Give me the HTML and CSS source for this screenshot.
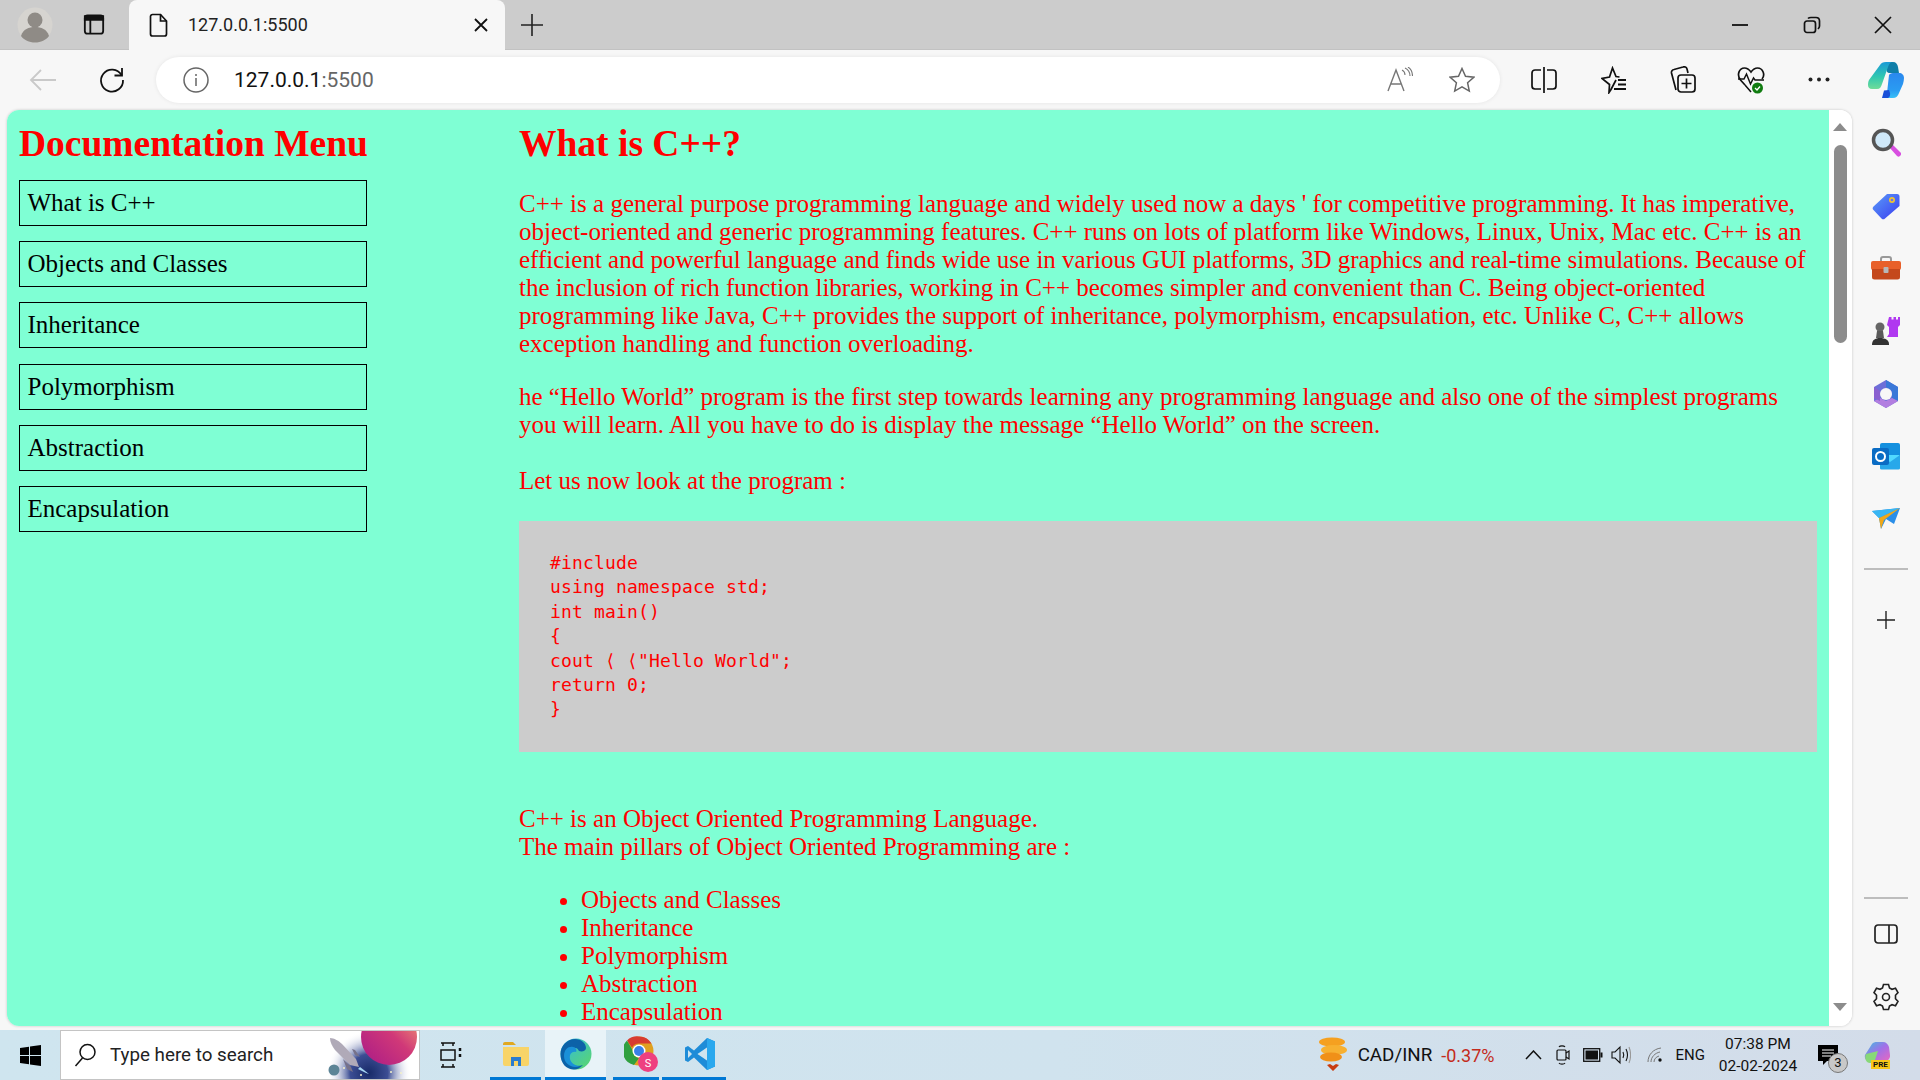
FILE: index.html
```html
<!DOCTYPE html>
<html lang="en">
<head>
    <meta charset="UTF-8">
    <meta name="viewport" content="width=device-width, initial-scale=1.0">
    <title>127.0.0.1:5500</title>
    <link rel="stylesheet" href="styles.css">
</head>
<body>
    <div class="tabstrip">
        <div class="strip-left">
            <svg width="36" height="36" viewBox="0 0 36 36"><circle cx="18" cy="18" r="17.5" fill="#d6d4d0"/><circle cx="18" cy="13" r="7.5" fill="#8f8b86"/><path d="M4 29c2-7 8-9 14-9s12 2 14 9c-3 4-8 6.500-14 6.500S7 33 4 29z" fill="#8f8b86"/></svg>
            <svg width="22" height="23" viewBox="0 0 24 24" fill="none" stroke="#111" stroke-width="2"><rect x="2" y="2" width="20" height="20" rx="3"/><path d="M2 7h20V3H2z" fill="#111"/><path d="M8 7v15"/></svg>
        </div>
        <div class="tab">
            <svg width="20" height="24" viewBox="0 0 20 24" fill="none" stroke="#111" stroke-width="1.700"><path d="M3.500 1.500h8l6 6.500v13a2 2 0 0 1-2 2h-12a2 2 0 0 1-2-2v-17.500a2 2 0 0 1 2-2z"/><path d="M11.500 1.500v6.500h6"/></svg>
            <span class="tab-title">127.0.0.1:5500</span>
            <svg width="14" height="14" viewBox="0 0 14 14" stroke="#111" stroke-width="1.800"><path d="M1 1l12 12M13 1L1 13"/></svg>
        </div>
        <svg class="new-tab" width="24" height="24" viewBox="0 0 24 24" stroke="#222" stroke-width="1.600"><path d="M12 1v22M1 12h22"/></svg>
        <div class="win-controls">
            <div class="win-btn"><svg width="16" height="16" viewBox="0 0 16 16" stroke="#111" stroke-width="1.800"><path d="M0 8h16"/></svg></div>
            <div class="win-btn"><svg width="18" height="18" viewBox="0 0 18 18" fill="none" stroke="#111" stroke-width="1.700"><rect x="1.500" y="5" width="11" height="11.500" rx="2.500"/><path d="M5 2.500C6 1.500 7 1.500 8 1.500h5c2 0 3.500 1.500 3.500 3.500v5c0 1-.5 2-1.500 3"/></svg></div>
            <div class="win-btn"><svg width="18" height="18" viewBox="0 0 18 18" stroke="#111" stroke-width="1.700"><path d="M1 1l16 16M17 1L1 17"/></svg></div>
        </div>
    </div>

    <div class="toolbar">
        <div class="nav-btn back"><svg width="28" height="24" viewBox="0 0 28 24" fill="none" stroke="#c9c9c9" stroke-width="1.800"><path d="M27 12H2M12 2L2 12l10 10"/></svg></div>
        <div class="nav-btn"><svg width="28" height="28" viewBox="0 0 28 28" fill="none" stroke="#111" stroke-width="1.800"><path d="M23.500 9A11 11 0 1 0 25 14"/><path d="M24 2v7.500h-7.500"/></svg></div>
        <div class="omnibox">
            <svg width="26" height="26" viewBox="0 0 26 26" fill="none" stroke="#666" stroke-width="1.500"><circle cx="13" cy="13" r="12"/><path d="M13 11v8M13 7v2"/></svg>
            <span class="url">127.0.0.1<span class="url-port">:5500</span></span>
            <svg class="read-aloud" width="26" height="26" viewBox="0 0 26 26" fill="none" stroke="#777" stroke-width="1.400"><path d="M1 24L9 3l8 21M4 17h10"/><path d="M15 3c2 1 3 3 3 5M18 1c3 1.500 5 4 5 8M21 0c3 2 4.500 5 4.500 9" stroke-width="1.100"/></svg>
            <svg class="fav-star" width="26" height="26" viewBox="0 0 26 26" fill="none" stroke="#666" stroke-width="1.500"><path d="M13 1.500l3.500 7.700 8.300 1-6.200 5.600 1.700 8.300-7.300-4.200-7.300 4.200 1.700-8.300-6.200-5.600 8.300-1z"/></svg>
        </div>
        <div class="tools">
            <div class="tool"><svg width="26" height="28" viewBox="0 0 26 28" fill="none" stroke="#111" stroke-width="1.700"><path d="M10 4H4a3 3 0 0 0-3 3v13a3 3 0 0 0 3 3h6M16 4h6a3 3 0 0 1 3 3v13a3 3 0 0 1-3 3h-6M13 1v26"/></svg></div>
            <div class="tool shift"><svg width="26" height="28" viewBox="0 0 26 28" fill="none" stroke="#111" stroke-width="1.700"><path d="M15 14l-5 9.500-2 3 .5-8L1 12.500l7.500-1.500L11.500 2l3.500 8.500 3.500.5"/><path d="M17 14h8M17 18.500h8M13 23h12" stroke-width="1.800"/></svg></div>
            <div class="tool"><svg width="26" height="28" viewBox="0 0 26 28" fill="none" stroke="#111" stroke-width="1.700"><path d="M6 24L1.500 7A3 3 0 0 1 4 3.500l9-2.500a3 3 0 0 1 4 2l1 4"/><rect x="8" y="9" width="17" height="17" rx="3"/><path d="M16.500 12.500v10M11.500 17.500h10"/></svg></div>
            <div class="tool"><svg width="28" height="30" viewBox="0 0 28 30" fill="none"><path d="M8 20L3.500 15C-.5 10 2 3 7.500 3c3 0 5 2 6.500 4 1.500-2 3.500-4 6.500-4C26 3 28.500 10 25 14" stroke="#111" stroke-width="1.700"/><path d="M1 14h6l2.500-5 4 10 3-6 1.500 2h9M8 20l6 7" stroke="#111" stroke-width="1.500"/><circle cx="20.500" cy="23" r="5.500" fill="#107c10"/><path d="M18 23l2 2 3-3.500" stroke="#fff" stroke-width="1.300"/></svg></div>
            <div class="tool"><svg width="22" height="5" viewBox="0 0 22 5" fill="#222"><circle cx="2.500" cy="2.500" r="2"/><circle cx="11" cy="2.500" r="2"/><circle cx="19.500" cy="2.500" r="2"/></svg></div>
            <div class="tool copilot"><svg width="36" height="36" viewBox="0 0 36 36"><defs><linearGradient id="cpA" x1="0" y1="0" x2="0" y2="1"><stop offset="0" stop-color="#1a9ad6"/><stop offset=".55" stop-color="#30c8b0"/><stop offset="1" stop-color="#70dc98"/></linearGradient><linearGradient id="cpB" x1="0" y1="0" x2="0" y2="1"><stop offset="0" stop-color="#2a88ee"/><stop offset=".7" stop-color="#2a9cf2"/><stop offset="1" stop-color="#38c0f8"/></linearGradient></defs><path d="M18 0h7c3 0 4.500 2 5 5l1 6h-9c-3 0-4-2-3-5z" fill="#0f7ea8"/><path d="M12 3c1-2 3-3 6-3h7c-3 0-4 2-5 5l-6 17c-1 3-2 5-5 5H4c-3 0-4-2-4-4 0-1 0-3 1-5z" fill="url(#cpA)"/><path d="M21 13c.5-1 2-2 4-2h6c3 0 5 2 5 5 0 2-.5 4-1 6l-4 9c-1 3-3 5-6 5H14c3 0 4-2 5-5z" fill="url(#cpB)"/><path d="M14 36h5c2 0 3.500-2 3-5l-1-3-5 .5z" fill="#1a50d8"/></svg></div>
        </div>
    </div>

    <div class="browser-body">
        <div class="viewport">
            <div class="page">
                <aside class="menu">
                    <h1>Documentation Menu</h1>
                    <div class="menu-item">What is C++</div>
                    <div class="menu-item">Objects and Classes</div>
                    <div class="menu-item">Inheritance</div>
                    <div class="menu-item">Polymorphism</div>
                    <div class="menu-item">Abstraction</div>
                    <div class="menu-item">Encapsulation</div>
                </aside>
                <main class="doc">
                    <h1>What is C++?</h1>
                    <p>C++ is a general purpose programming language and widely used now a days ' for competitive programming. It has imperative, object-oriented and generic programming features. C++ runs on lots of platform like Windows, Linux, Unix, Mac etc. C++ is an efficient and powerful language and finds wide use in various GUI platforms, 3D graphics and real-time simulations. Because of the inclusion of rich function libraries, working in C++ becomes simpler and convenient than C. Being object-oriented programming like Java, C++ provides the support of inheritance, polymorphism, encapsulation, etc. Unlike C, C++ allows exception handling and function overloading.</p>
                    <p>he “Hello World” program is the first step towards learning any programming language and also one of the simplest programs you will learn. All you have to do is display the message “Hello World” on the screen.<br><br>Let us now look at the program :</p>
                    <pre class="code">#include
using namespace std;
int main()
{
cout ⟨ ⟨"Hello World";
return 0;
}</pre>
                    <p class="after-code">C++ is an Object Oriented Programming Language.<br>The main pillars of Object Oriented Programming are :</p>
                    <ul>
                        <li>Objects and Classes</li>
                        <li>Inheritance</li>
                        <li>Polymorphism</li>
                        <li>Abstraction</li>
                        <li>Encapsulation</li>
                    </ul>
                </main>
            </div>
            <div class="scrollbar">
                <div class="arrow-up"></div>
                <div class="thumb"></div>
                <div class="arrow-down"></div>
            </div>
        </div>

        <div class="sidebar">
            <div class="side-slot"><svg width="30" height="30" viewBox="0 0 30 30"><path d="M18 19l3-3 8 8a2 2 0 0 1-3 4z" fill="#d84fe0"/><circle cx="12" cy="12" r="9.500" fill="#cfe8f8" stroke="#555" stroke-width="3.500"/></svg></div>
            <div class="side-slot"><svg width="28" height="28" viewBox="0 0 28 28"><defs><linearGradient id="tagG" x1="0" y1="0" x2="1" y2="1"><stop offset="0" stop-color="#5a9cf8"/><stop offset="1" stop-color="#3a3cf0"/></linearGradient></defs><path d="M15 2h10a2.500 2.500 0 0 1 2.500 2.500V14L13 26.500a2.500 2.500 0 0 1-3.500 0L1.500 18a2.500 2.500 0 0 1 0-3.500z" fill="url(#tagG)"/><circle cx="20" cy="8" r="3" fill="#f0c430"/><circle cx="20" cy="8" r="1.300" fill="#6a70f0"/></svg></div>
            <div class="side-slot"><svg width="30" height="24" viewBox="0 0 30 24"><path d="M10 6V3a2 2 0 0 1 2-2h6a2 2 0 0 1 2 2v3" fill="none" stroke="#999" stroke-width="2"/><rect y="5" width="30" height="9" rx="2" fill="#e8602a"/><path d="M1 13h28v8a2.500 2.500 0 0 1-2.500 2.500h-23A2.500 2.500 0 0 1 1 21z" fill="#c4481c"/><rect x="12.500" y="11" width="5" height="6" rx="1" fill="#b8b8b8"/></svg></div>
            <div class="side-slot"><svg width="30" height="30" viewBox="0 0 30 30"><path d="M18 1h2.500v2.500h2V1h2.500v2.500h2V1H29v8l-2 2v10H16l2-3V11l-2-2z" fill="#b038f0"/><circle cx="9" cy="11" r="4.500" fill="#666"/><path d="M6 15h6l1 7H5z" fill="#5a5a5a"/><path d="M1 29c0-5 3-7 8-7s9 2 9 6v1z" fill="#333"/></svg></div>
            <div class="side-slot"><svg width="28" height="30" viewBox="0 0 28 30" fill="none"><path d="M14 1L26 8v14l-12 7-12-7V8z" fill="#6d6fd8"/><path d="M14 1l12 7v14l-6-3V12l-6-4z" fill="#3a78d8"/><path d="M2 22l12 7 12-7-6-3-6 3-6-3z" fill="#b27ee0"/><path d="M2 8l6 4v10l-6-3z" fill="#8a60d0"/><circle cx="14" cy="15" r="6" fill="#f7f7f7"/></svg></div>
            <div class="side-slot"><svg width="28" height="28" viewBox="0 0 28 28"><rect x="8" y="1" width="20" height="26" rx="2" fill="#1490df"/><path d="M8 14h20v12a1.500 1.500 0 0 1-1.500 1.500h-17A1.500 1.500 0 0 1 8 26z" fill="#28a8ea"/><path d="M28 13l-10 7-10-7" fill="#50d9ff"/><rect y="6" width="17" height="17" rx="2" fill="#0a6cc4"/><circle cx="8.500" cy="14.500" r="4.500" fill="none" stroke="#fff" stroke-width="2"/></svg></div>
            <div class="side-slot"><svg width="28" height="22" viewBox="0 0 28 22"><path d="M0 3l28-3-6 16-8-5-5 10-2-11z" fill="#2a8ee8"/><path d="M0 3l28-3L7 10z" fill="#38b6f2"/><path d="M28 0L7 10l2 11 3-9z" fill="#f0a818"/></svg></div>
            <div class="side-rule first"></div>
            <div class="side-slot"><svg width="20" height="20" viewBox="0 0 20 20" stroke="#222" stroke-width="1.400"><path d="M10 1v18M1 10h18"/></svg></div>
            <div class="side-bottom">
                <div class="side-rule"></div>
                <div class="side-slot small"><svg width="24" height="20" viewBox="0 0 24 20" fill="none" stroke="#222" stroke-width="1.700"><rect x="1" y="1" width="22" height="18" rx="3"/><path d="M15 1v18"/></svg></div>
                <div class="side-slot"><svg width="26" height="28" viewBox="0 0 26 28" fill="none" stroke="#222" stroke-width="1.600"><circle cx="13" cy="14" r="3.500"/><path d="M10.500 1.500h5l1 3.500 2.500 1.300 3.500-1 2.500 4.300-2.500 2.600v3.600l2.500 2.600-2.500 4.300-3.500-1-2.500 1.300-1 3.500h-5l-1-3.500-2.500-1.300-3.500 1-2.500-4.300L3.500 15.800v-3.600L1 9.600l2.500-4.300 3.500 1 2.500-1.300z"/></svg></div>
            </div>
        </div>
    </div>

    <footer class="taskbar">
        <div class="start"><svg width="21" height="21" viewBox="0 0 21 21" fill="#000"><path d="M0 3l9-1.300V10H0zM10 1.500L21 0v10H10zM0 11h9v8.300L0 18zM10 11h11v10l-11-1.500z"/></svg></div>
        <div class="searchbox">
            <svg width="22" height="24" viewBox="0 0 22 24" fill="none" stroke="#111" stroke-width="1.500"><circle cx="13.500" cy="9" r="7.500"/><path d="M8.500 15L1.500 23"/></svg>
            <span>Type here to search</span>
            <svg class="search-art" width="100" height="48" viewBox="0 0 100 48"><defs><radialGradient id="artGlow" gradientUnits="userSpaceOnUse" cx="50" cy="42" r="42"><stop offset="0" stop-color="#182a68"/><stop offset=".45" stop-color="#3c4e94"/><stop offset="1" stop-color="#fff" stop-opacity="0"/></radialGradient><linearGradient id="artPlanet" x1="1" y1="0" x2="0" y2="1"><stop offset="0" stop-color="#f4a070"/><stop offset=".45" stop-color="#d03878"/><stop offset="1" stop-color="#a81a88"/></linearGradient></defs><rect width="100" height="48" fill="#fff"/><rect width="100" height="48" fill="url(#artGlow)"/><circle cx="70" cy="6" r="28" fill="url(#artPlanet)"/><path d="M11 7c4 0 9 3 12 6l14 15 3 8-9-2-15-15c-3-4-5-8-5-12z" fill="#b0aab8"/><path d="M24 28l8 8 2 5-6-3zM33 18l3 6 5 2-5-7z" fill="#77728a"/><path d="M41 36l9 7-3-1-8-4z" fill="#a8d8f4"/><circle cx="15" cy="39" r="5.500" fill="#5c8496"/><circle cx="25" cy="37" r="1" fill="#f4f0c8"/><circle cx="42" cy="44" r="1" fill="#f4f0c8"/><circle cx="72" cy="41" r="1" fill="#f4f0c8"/><circle cx="82" cy="42" r="1" fill="#f4f0c8"/></svg>
        </div>
        <div class="task-view"><svg width="22" height="26" viewBox="0 0 22 26" fill="none" stroke="#111" stroke-width="1.500"><path d="M1 1h14M1 25h14M3 1v3M13 1v3M3 25v-3M13 25v-3"/><rect x="1" y="8" width="14" height="10"/><path d="M20 6v3M20 12v3" stroke-width="2.500"/></svg></div>
        <div class="task-app"><svg width="28" height="28" viewBox="0 0 28 28"><path d="M1 4a2 2 0 0 1 2-2h8l3 3H1z" fill="#e0a820"/><path d="M1 7h26v17a2 2 0 0 1-2 2H3a2 2 0 0 1-2-2z" fill="#f8d468"/><path d="M9 26v-9h10v9h-3v-5h-4v5z" fill="#2a7cd0"/></svg></div>
        <div class="task-app edge"><svg width="32" height="32" viewBox="0 0 32 32"><defs><linearGradient id="edgeG" x1="0" y1="0" x2="1" y2="1"><stop offset="0" stop-color="#2fb8e8"/><stop offset="1" stop-color="#5cd868"/></linearGradient></defs><circle cx="16" cy="16" r="15.500" fill="url(#edgeG)"/><path d="M.5 16C.5 8 7 1 15 1c6 0 11 4 11 9 0 3-4 4-7 3-1-3-4-4-7-3C6 12 5 20 10 25c3 3 8 4 13 2-3 3-6 4.500-9 4.500C6 31.500.5 25 .5 16z" fill="#0c62a8"/><path d="M4 18c0-7 5-10 9-9 3 .5 4 3 3 5-4-1-7 2-6 7 1 4 5 7 10 7-8 3-16-2-16-10z" fill="#1a90d8"/></svg></div>
        <div class="task-app chrome"><svg width="34" height="36" viewBox="0 0 34 36"><circle cx="15" cy="15" r="14.500" fill="#e0a020"/><path d="M15 .5a14.500 14.500 0 0 1 12.500 7H15a8 8 0 0 0-7 4L3 4.500A14.500 14.500 0 0 1 15 .5z" fill="#d83c30"/><path d="M3 4.500l6 10.500a7 7 0 0 0 6 7l-5 7A14.500 14.500 0 0 1 3 4.500z" fill="#30a040"/><circle cx="15" cy="15" r="6.500" fill="#fff"/><circle cx="15" cy="15" r="5" fill="#3a80e8"/><circle cx="24" cy="26" r="10" fill="#ee4080"/><text x="24" y="30.500" class="profile-s">S</text></svg></div>
        <div class="task-app code-app"><svg width="30" height="32" viewBox="0 0 30 32"><path d="M22 0l8 3.500v25L22 32 9 19.500 3 24l-3-1.500v-13L3 8l6 4.500z" fill="#1e8cd8"/><path d="M22 0l8 3.500v25L22 32zM22 9.500L12.500 16l9.500 6.500z" fill="#2aa8ee"/><path d="M22 9.500L12.500 16l9.500 6.500z" fill="#d0e4ee"/><path d="M3 12v8l4-4z" fill="#d0e4ee"/></svg></div>

        <div class="tray">
            <svg class="coins" width="30" height="36" viewBox="0 0 30 36"><ellipse cx="14" cy="5" rx="13" ry="4.500" fill="#f5a020"/><ellipse cx="16" cy="13" rx="13" ry="5" fill="#f7b030"/><ellipse cx="13" cy="20" rx="11" ry="4.500" fill="#f09018"/><path d="M9 28l6 6 6-6-3-1-3 2-3-2z" fill="#c83c10"/></svg>
            <span class="ticker">CAD/INR</span>
            <span class="change">-0.37%</span>
            <svg class="tray-chevron" width="17" height="10" viewBox="0 0 17 10" fill="none" stroke="#111" stroke-width="1.500"><path d="M1 9l7.500-8L16 9"/></svg>
            <svg class="tray-icon camera" width="14" height="22" viewBox="0 0 14 22" fill="none" stroke="#111" stroke-width="1.200"><path d="M3 3c1-1.500 5-1.500 6 0M3 19c1 1.500 5 1.500 6 0"/><rect x="1" y="6" width="9" height="10" rx="1"/><path d="M10 9l3-2v8l-3-2"/></svg>
            <svg class="tray-icon battery" width="20" height="14" viewBox="0 0 20 14"><rect x=".7" y=".7" width="16" height="12.600" fill="none" stroke="#111" stroke-width="1.300"/><rect x="2.500" y="2.500" width="12.500" height="9" fill="#111"/><rect x="17.500" y="4.500" width="2" height="5" fill="#111"/></svg>
            <svg class="tray-icon speaker" width="20" height="20" viewBox="0 0 20 20" fill="none" stroke="#111" stroke-width="1.100"><path d="M1 7h3l5-5v16l-5-5H1z"/><path d="M12 7c1 2 1 4 0 6M15 4c2 4 2 8 0 12"/><path d="M18 2c2 5 2 11 0 16" stroke="#999"/></svg>
            <svg class="tray-icon wifi" width="16" height="16" viewBox="0 0 16 16" fill="none" stroke="#777" stroke-width="1"><path d="M1 15C1 8 6 2 14 1M4 15c0-5 4-9 9-10M7 15c0-3 2-5 5-6"/><circle cx="13" cy="13" r="1.700" fill="#111" stroke="none"/></svg>
            <span class="lang">ENG</span>
            <div class="clock"><span>07:38 PM</span><span>02-02-2024</span></div>
            <div class="notif">
                <svg width="20" height="20" viewBox="0 0 20 20"><path d="M0 0h20v16H9l-4 4v-4H0z" fill="#000"/><path d="M4 5h12M4 8h12M4 11h9" stroke="#fff" stroke-width="1"/></svg>
                <span class="notif-count">3</span>
            </div>
            <div class="copilot-pre">
                <svg width="26" height="26" viewBox="0 0 26 26"><defs><linearGradient id="preG" x1="0" y1="0" x2="1" y2="1"><stop offset="0" stop-color="#3cc0e0"/><stop offset=".5" stop-color="#a070e8"/><stop offset="1" stop-color="#e868c0"/></linearGradient></defs><path d="M8 2c1-1.500 3-2 5-2h6c3 0 5 2 6 5l1 8c.5 3-1.500 6-5 6H6c-3 0-6-2-5-6z" fill="url(#preG)"/><path d="M2 12c-2 4 0 9 4 9h4l4-12z" fill="#88d878"/></svg>
                <span class="pre-badge">PRE</span>
            </div>
        </div>
    </footer>
</body>
</html>
```

FILE: styles.css
```css
* {
    box-sizing: border-box;
}
html, body {
    height: 100%;
}
body {
    margin: 0;
    width: 1920px;
    height: 1080px;
    overflow: hidden;
    display: flex;
    flex-direction: column;
    background-color: #f7f7f7;
    font-family: Roboto, "Noto Sans", sans-serif;
}
svg {
    display: block;
    flex-shrink: 0;
}

/* tab strip */
.tabstrip {
    height: 50px;
    background-color: #cccccc;
    display: flex;
    align-items: center;
    border-bottom: 1px solid #c2c2c2;
}
.strip-left {
    width: 129px;
    padding-left: 17px;
    display: flex;
    align-items: center;
    gap: 30px;
}
.tab {
    width: 376px;
    height: 50px;
    background-color: #f7f7f7;
    border-radius: 8px 8px 0 0;
    display: flex;
    align-items: center;
    padding: 0 17px 0 20px;
}
.tab-title {
    flex: 1;
    margin-left: 19px;
    font-size: 18px;
    color: #222;
}
.new-tab {
    margin-left: 15px;
}
.win-controls {
    margin-left: auto;
    display: flex;
    padding-right: 1px;
}
.win-btn {
    width: 71.500px;
    height: 50px;
    display: flex;
    align-items: center;
    justify-content: center;
}

/* toolbar */
.toolbar {
    height: 60px;
    display: flex;
    align-items: center;
    padding-left: 9px;
    padding-bottom: 1px;
}
.nav-btn {
    width: 69px;
    display: flex;
    justify-content: center;
}
.omnibox {
    width: 1344px;
    height: 46px;
    margin-left: 9px;
    background-color: white;
    border-radius: 23px;
    box-shadow: 0 0 4px rgba(0, 0, 0, 0.08);
    display: flex;
    align-items: center;
    padding-left: 27px;
}
.url {
    margin-left: 25px;
    font-size: 21px;
    color: #111;
}
.url-port {
    color: #666;
}
.read-aloud {
    margin-left: auto;
}
.fav-star {
    margin: 0 25px 0 36px;
}
.tools {
    display: flex;
    margin-left: 10px;
}
.tool {
    width: 68.400px;
    display: flex;
    justify-content: center;
    align-items: center;
}
.tool.shift {
    margin-left: 2px;
}
.tool.copilot {
    margin-left: -2px;
}

/* content */
.browser-body {
    flex: 1;
    display: flex;
    min-height: 0;
}
.viewport {
    width: 1845px;
    margin: 0 0 4px 7px;
    display: flex;
    border-radius: 12px;
    overflow: hidden;
    background-color: white;
    box-shadow: 0 0 3px rgba(0, 0, 0, 0.2);
}
.page {
    flex: 1;
    min-width: 0;
    overflow: hidden;
    background-color: #7fffd4;
    display: flex;
    color: red;
    font-family: "Liberation Serif", "Times New Roman", serif;
    font-size: 25px;
    line-height: 28px;
}
.menu {
    width: 360px;
    padding-left: 12px;
    flex-shrink: 0;
}
.page h1 {
    margin: 0;
    font-size: 37.500px;
    line-height: 43px;
    padding-top: 12px;
    white-space: nowrap;
}
.menu h1 {
    margin-bottom: 15px;
}
.menu-item {
    width: 348px;
    height: 46px;
    margin-bottom: 15.200px;
    padding: 0 7.500px;
    border: 1.500px solid black;
    color: black;
    font-size: 25px;
    line-height: 43px;
}
.doc {
    width: 1298px;
    margin-left: 152px;
    flex-shrink: 0;
}
.doc p {
    margin: 25px 0;
}
.code {
    margin: 26px 0 0;
    padding: 30px 31px;
    background-color: #cccccc;
    font-family: "DejaVu Sans Mono", "Liberation Mono", monospace;
    font-size: 18px;
    letter-spacing: 0.160px;
    line-height: 24.400px;
}
.doc .after-code {
    margin-top: 53px;
}
.doc ul {
    margin: 0;
    padding-left: 62px;
}
.scrollbar {
    width: 23px;
    background-color: white;
    position: relative;
    flex-shrink: 0;
}
.thumb {
    position: absolute;
    left: 5px;
    top: 35px;
    width: 13px;
    height: 198px;
    border-radius: 7px;
    background-color: #8c8c8c;
}
.arrow-up,
.arrow-down {
    position: absolute;
    left: 4px;
    width: 0;
    height: 0;
    border-left: 7.500px solid transparent;
    border-right: 7.500px solid transparent;
}
.arrow-up {
    top: 13px;
    border-bottom: 8px solid #8c8c8c;
}
.arrow-down {
    bottom: 15px;
    border-top: 8px solid #8c8c8c;
}

/* right sidebar */
.sidebar {
    flex: 1;
    display: flex;
    flex-direction: column;
    align-items: center;
    padding-top: 2px;
}
.side-slot {
    height: 62.600px;
    display: flex;
    align-items: center;
    justify-content: center;
    flex-shrink: 0;
}
.side-slot.small {
    height: 46px;
    margin-top: 12px;
    margin-bottom: 8px;
}
.side-rule {
    width: 44px;
    height: 2px;
    background-color: #bdbdbd;
}
.side-rule.first {
    margin-top: 18px;
    margin-bottom: 19px;
}
.side-bottom {
    margin-top: auto;
    display: flex;
    flex-direction: column;
    align-items: center;
    padding-bottom: 2px;
}

/* taskbar */
.taskbar {
    height: 50px;
    display: flex;
    align-items: center;
    background: linear-gradient(90deg, #cfe5ef, #d0e3ee 55%, #d3dce9);
    color: #111;
}
.start {
    width: 60px;
    padding-left: 20px;
}
.searchbox {
    width: 360px;
    height: 50px;
    background-color: white;
    border: 1px solid #c4c4c4;
    display: flex;
    align-items: center;
    padding-left: 13px;
    font-size: 18.800px;
    color: #222;
}
.searchbox span {
    margin-left: 14px;
}
.search-art {
    margin-left: auto;
}
.task-view {
    width: 70px;
    padding-left: 20px;
}
.task-app {
    height: 50px;
    width: 51px;
    display: flex;
    align-items: center;
    justify-content: center;
    border-bottom: 3px solid #0078d4;
}
.task-app.edge {
    width: 61px;
    margin-left: 4px;
    background-color: #e8f3f8;
}
.task-app.chrome {
    width: 46px;
    margin-left: 7px;
    padding-left: 9px;
}
.task-app.code-app {
    width: 64px;
    margin-left: 3px;
    padding-left: 12px;
}
.profile-s {
    font-size: 11px;
    fill: white;
    text-anchor: middle;
    font-family: Roboto, sans-serif;
}
.tray {
    margin-left: auto;
    display: flex;
    align-items: center;
    height: 50px;
    padding-right: 15px;
}
.ticker {
    margin-left: 10px;
    font-size: 18.800px;
}
.change {
    margin-left: 9px;
    font-size: 18px;
    color: #c42b1c;
}
.tray-chevron {
    margin-left: 30px;
}
.tray-icon {
    margin-left: 15px;
}
.tray-icon.camera {
    margin-left: 14px;
}
.tray-icon.battery {
    margin-left: 13px;
}
.tray-icon.speaker {
    margin-left: 8px;
}
.tray-icon.wifi {
    margin-left: 16px;
}
.lang {
    margin-left: 13px;
    font-size: 15px;
}
.clock {
    width: 98px;
    margin-left: 4px;
    display: flex;
    flex-direction: column;
    align-items: center;
    gap: 5px;
    font-size: 15.500px;
    line-height: 17px;
}
.notif {
    width: 36px;
    padding-left: 11px;
    position: relative;
}
.notif-count {
    position: absolute;
    left: 21px;
    top: 8px;
    width: 20px;
    height: 20px;
    border-radius: 50%;
    background-color: #c8c8c8;
    border: 1px solid #777;
    font-size: 13px;
    line-height: 18px;
    text-align: center;
}
.copilot-pre {
    width: 52px;
    margin-left: 10px;
    padding-left: 11px;
    position: relative;
}
.pre-badge {
    position: absolute;
    left: 18px;
    top: 18px;
    padding: 0 2px;
    background-color: #f8c818;
    font-size: 8px;
    font-weight: bold;
    line-height: 9px;
}
```
